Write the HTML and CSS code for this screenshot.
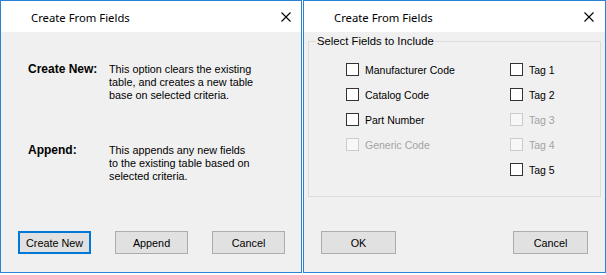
FILE: index.html
```html
<!DOCTYPE html>
<html lang="en">
<head>
    <meta charset="UTF-8">
    <title>Create From Fields</title>
    <link rel="stylesheet" href="styles.css">
</head>
<body>
    <div class="screen">

        <!-- Dialogo izquierdo: opciones -->
        <section class="dialog dialog-left">
            <header class="titlebar">
                <span class="title">Create From Fields</span>
                <svg class="close" width="10" height="10" viewBox="0 0 10 10">
                    <path d="M0.5 0.5 L9.5 9.5 M9.5 0.5 L0.5 9.5" stroke="#000" stroke-width="1.1" fill="none"/>
                </svg>
            </header>
            <div class="body">
                <div class="options">
                    <div class="option">
                        <span class="opt-name">Create New:</span>
                        <p class="opt-desc">This option clears the existing<br>table, and creates a new table<br>base on selected criteria.</p>
                    </div>
                    <div class="option option-append">
                        <span class="opt-name">Append:</span>
                        <p class="opt-desc">This appends any new fields<br>to the existing table based on<br>selected criteria.</p>
                    </div>
                </div>
                <div class="buttons">
                    <button class="btn btn-default">Create New</button>
                    <button class="btn btn-append">Append</button>
                    <button class="btn btn-right">Cancel</button>
                </div>
            </div>
        </section>

        <!-- Dialogo derecho: campos -->
        <section class="dialog dialog-right">
            <header class="titlebar">
                <span class="title">Create From Fields</span>
                <svg class="close" width="10" height="10" viewBox="0 0 10 10">
                    <path d="M0.5 0.5 L9.5 9.5 M9.5 0.5 L0.5 9.5" stroke="#000" stroke-width="1.1" fill="none"/>
                </svg>
            </header>
            <div class="body">
                <fieldset class="group">
                    <legend>Select Fields to Include</legend>
                    <div class="fields">
                        <label class="check"><span class="box"></span>Manufacturer Code</label>
                        <label class="check"><span class="box"></span>Tag 1</label>
                        <label class="check"><span class="box"></span>Catalog Code</label>
                        <label class="check"><span class="box"></span>Tag 2</label>
                        <label class="check"><span class="box"></span>Part Number</label>
                        <label class="check disabled"><span class="box"></span>Tag 3</label>
                        <label class="check disabled"><span class="box"></span>Generic Code</label>
                        <label class="check disabled"><span class="box"></span>Tag 4</label>
                        <span></span>
                        <label class="check"><span class="box"></span>Tag 5</label>
                    </div>
                </fieldset>
                <div class="buttons">
                    <button class="btn">OK</button>
                    <button class="btn btn-right">Cancel</button>
                </div>
            </div>
        </section>

    </div>
</body>
</html>
```

FILE: styles.css
```css
/* Estilos generales */
* {
    box-sizing: border-box;
}

body {
    margin: 0;
    background-color: #fff;
    font-family: "Liberation Sans", Arial, sans-serif;
    font-size: 10.5px;
    color: #000;
}

.screen {
    display: flex;
    gap: 1px;
    height: 273px;
}

.dialog {
    display: flex;
    flex-direction: column;
    border: 1px solid #2b83d6;
    background-color: #f0f0f0;
}

.dialog-left {
    width: 302px;
}

.dialog-right {
    width: 303px;
}

.titlebar {
    display: flex;
    align-items: center;
    justify-content: space-between;
    height: 31px;
    padding: 0 10px 0 30px;
    background-color: #fff;
}

.title {
    font-family: "Noto Sans", sans-serif;
    font-size: 11.3px;
    padding-top: 1px;
}

.close {
    display: block;
}

.dialog-right .close {
    margin-right: 1px;
}

.body {
    flex: 1;
    display: flex;
    flex-direction: column;
}

/* Opciones */
.options {
    padding: 31px 0 0 27px;
}

.option {
    display: flex;
    line-height: 13px;
}

.option-append {
    margin-top: 42px;
}

.opt-name {
    width: 81px;
    font-weight: bold;
    font-size: 12px;
}

.opt-desc {
    margin: 0;
    font-size: 10.8px;
}

/* Botones */
.buttons {
    display: flex;
    gap: 24px;
    margin-top: auto;
    padding: 0 16px 18px 17px;
}

.dialog-right .buttons {
    padding-right: 17px;
}

.btn {
    width: 75px;
    height: 23px;
    padding: 0;
    font-family: "Liberation Sans", Arial, sans-serif;
    font-size: 10.8px;
    color: #000;
    background-color: #e1e1e1;
    border: 1px solid #adadad;
}

.btn-default {
    border: 2px solid #0078d7;
}

.btn-right {
    margin-left: auto;
}

/* Grupo de campos */
.group {
    margin: 3px 4px 0 4px;
    padding: 9px 0 14px 0;
    border: 1px solid #dcdcdc;
}

.group legend {
    margin-left: 7px;
    padding: 0 1px;
    line-height: 13px;
    font-size: 11.3px;
}

.fields {
    display: grid;
    grid-template-columns: 164px auto;
    grid-auto-rows: 25px;
    align-items: center;
    padding-left: 37px;
}

.check {
    display: flex;
    align-items: center;
    gap: 6px;
}

.box {
    width: 13px;
    height: 13px;
    border: 1px solid #333;
    background-color: #fff;
}

.check.disabled {
    color: #a3a3a3;
}

.check.disabled .box {
    border-color: #ccc;
    background-color: #f7f7f7;
}
```
